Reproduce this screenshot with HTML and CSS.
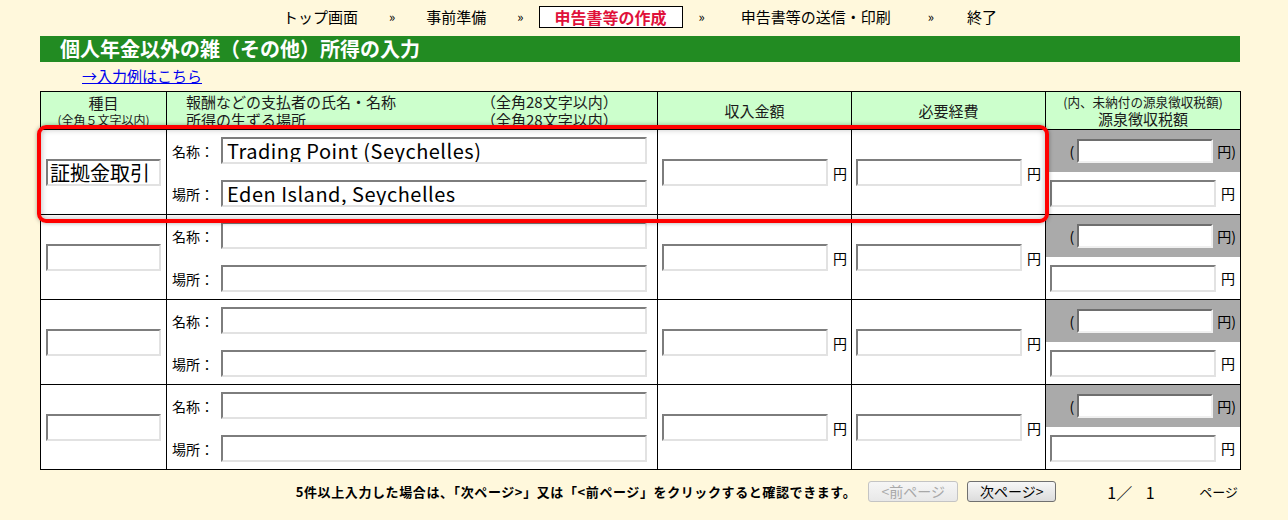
FILE: index.html
```html
<!DOCTYPE html>
<html lang="ja">
<head>
<meta charset="utf-8">
<title>個人年金以外の雑（その他）所得の入力</title>
<link rel="stylesheet" href="styles.css">
</head>
<body>
<div class="page">
  <nav class="steps">
    <span class="step">トップ画面</span>
    <span class="sep">»</span>
    <span class="step">事前準備</span>
    <span class="sep sep-pre">»</span>
    <span class="step current">申告書等の作成</span>
    <span class="sep sep-post">»</span>
    <span class="step">申告書等の送信・印刷</span>
    <span class="sep sep-wide">»</span>
    <span class="step">終了</span>
  </nav>

  <h1 class="title">個人年金以外の雑（その他）所得の入力</h1>
  <div class="example"><a href="#">→入力例はこちら</a></div>

  <div class="table-wrap">
    <table class="grid">
      <colgroup>
        <col class="c1"><col class="c2"><col class="c3"><col class="c4"><col class="c5">
      </colgroup>
      <thead>
        <tr>
          <th class="h-kind"><div class="h-main">種目</div><div class="h-sub">(全角５文字以内)</div></th>
          <th class="h-payer">
            <div class="h-line"><span class="h-left">報酬などの支払者の氏名・名称</span><span>（全角28文字以内）</span></div>
            <div class="h-line"><span class="h-left">所得の生ずる場所</span><span>（全角28文字以内）</span></div>
          </th>
          <th>収入金額</th>
          <th>必要経費</th>
          <th class="h-tax"><div class="h-sub2">(内、未納付の源泉徴収税額)</div><div class="h-main">源泉徴収税額</div></th>
        </tr>
      </thead>
      <tbody>
        <tr>
          <td class="kind"><input class="in-kind" type="text" value="証拠金取引"></td>
          <td class="payer">
            <div class="pline"><span class="plabel">名称：</span><input class="in-payer" type="text" value="Trading Point (Seychelles)"></div>
            <div class="pline"><span class="plabel">場所：</span><input class="in-payer" type="text" value="Eden Island, Seychelles"></div>
          </td>
          <td class="money"><input class="in-money" type="text"><span class="yen">円</span></td>
          <td class="money"><input class="in-money" type="text"><span class="yen">円</span></td>
          <td class="tax">
            <div class="tax-top"><span class="paren">(</span><input class="in-tax" type="text"><span class="yen">円)</span></div>
            <div class="tax-bottom"><input class="in-money" type="text"><span class="yen">円</span></div>
          </td>
        </tr>
        <tr>
          <td class="kind"><input class="in-kind" type="text"></td>
          <td class="payer">
            <div class="pline"><span class="plabel">名称：</span><input class="in-payer" type="text"></div>
            <div class="pline"><span class="plabel">場所：</span><input class="in-payer" type="text"></div>
          </td>
          <td class="money"><input class="in-money" type="text"><span class="yen">円</span></td>
          <td class="money"><input class="in-money" type="text"><span class="yen">円</span></td>
          <td class="tax">
            <div class="tax-top"><span class="paren">(</span><input class="in-tax" type="text"><span class="yen">円)</span></div>
            <div class="tax-bottom"><input class="in-money" type="text"><span class="yen">円</span></div>
          </td>
        </tr>
        <tr>
          <td class="kind"><input class="in-kind" type="text"></td>
          <td class="payer">
            <div class="pline"><span class="plabel">名称：</span><input class="in-payer" type="text"></div>
            <div class="pline"><span class="plabel">場所：</span><input class="in-payer" type="text"></div>
          </td>
          <td class="money"><input class="in-money" type="text"><span class="yen">円</span></td>
          <td class="money"><input class="in-money" type="text"><span class="yen">円</span></td>
          <td class="tax">
            <div class="tax-top"><span class="paren">(</span><input class="in-tax" type="text"><span class="yen">円)</span></div>
            <div class="tax-bottom"><input class="in-money" type="text"><span class="yen">円</span></div>
          </td>
        </tr>
        <tr>
          <td class="kind"><input class="in-kind" type="text"></td>
          <td class="payer">
            <div class="pline"><span class="plabel">名称：</span><input class="in-payer" type="text"></div>
            <div class="pline"><span class="plabel">場所：</span><input class="in-payer" type="text"></div>
          </td>
          <td class="money"><input class="in-money" type="text"><span class="yen">円</span></td>
          <td class="money"><input class="in-money" type="text"><span class="yen">円</span></td>
          <td class="tax">
            <div class="tax-top"><span class="paren">(</span><input class="in-tax" type="text"><span class="yen">円)</span></div>
            <div class="tax-bottom"><input class="in-money" type="text"><span class="yen">円</span></div>
          </td>
        </tr>
      </tbody>
    </table>
    <div class="highlight"></div>
  </div>

  <div class="footer">
    <span class="note">5件以上入力した場合は、「次ページ>」又は「<前ページ」をクリックすると確認できます。</span>
    <button class="btn btn-prev" type="button" disabled>&lt;前ページ</button>
    <button class="btn btn-next" type="button">次ページ&gt;</button>
    <span class="pageno">1／ 1</span>
    <span class="pagelabel">ページ</span>
  </div>
</div>
</body>
</html>
```

FILE: styles.css
```css
* { box-sizing: border-box; }

body {
  margin: 0;
  background: #fff8dc;
  font-family: "Noto Sans CJK JP", "Noto Sans", sans-serif;
  color: #000;
}

.page {
  width: 1288px;
  padding: 0 48px 0 40px;
}

/* step navigation */
.steps {
  display: flex;
  align-items: center;
  height: 22px;
  margin-top: 6px;
  padding-left: 243px;
}
.step {
  font-size: 15px;
  line-height: 22px;
  white-space: nowrap;
}
.step.current {
  border: 1px solid #000;
  background: #fff;
  color: #e0103a;
  font-size: 16px;
  font-weight: bold;
  height: 22px;
  line-height: 20px;
  padding: 0 15px;
}
.sep {
  font-size: 13px;
  line-height: 22px;
  margin: 0 31px;
}
.sep-pre { margin-right: 15px; }
.sep-post { margin-left: 16px; margin-right: 36px; }
.sep-wide { margin-left: 37px; margin-right: 33px; }

/* title */
.title {
  margin: 8px 0 0;
  height: 26px;
  background: #228b22;
  color: #fff;
  font-size: 20px;
  font-weight: bold;
  line-height: 26px;
  padding-left: 20px;
  white-space: nowrap;
}

.example {
  margin: 4px 0 5px;
  padding-left: 42px;
  font-size: 15px;
  line-height: 20px;
}
.example a { color: #0000ee; }

/* table */
.table-wrap {
  position: relative;
  width: 1200px;
}
.grid {
  border-collapse: collapse;
  table-layout: fixed;
  width: 1200px;
}
.c1 { width: 126px; }
.c2 { width: 491px; }
.c3 { width: 194px; }
.c4 { width: 194px; }
.c5 { width: 195px; }

.grid th,
.grid td {
  border: 1px solid #000;
  padding: 0;
}
.grid th {
  background: #ccffcc;
  font-weight: normal;
  font-size: 15px;
  line-height: 18px;
  height: 38px;
  color: #1a1a1a;
  text-align: center;
  vertical-align: middle;
}
.h-sub {
  font-size: 12px;
  line-height: 16px;
}
.h-sub2 {
  font-size: 12.6px;
  line-height: 16px;
}
.h-payer { text-align: left; }
.h-line {
  display: flex;
  padding-left: 19px;
  white-space: nowrap;
  text-align: left;
}
.h-left { width: 295px; }

.grid td {
  height: 85px;
  background: #fff;
  vertical-align: middle;
}

input {
  display: block;
  border-width: 2px;
  border-style: solid;
  border-color: #7d7d7d #e2e2e2 #e2e2e2 #7d7d7d;
  background: #fff;
  font-family: "Noto Sans CJK JP", "Noto Sans", sans-serif;
  font-size: 20px;
  color: #000;
  padding: 0 4px;
  margin: 0;
  outline: none;
}

.kind { padding-left: 5px !important; }
.in-kind {
  width: 115px;
  height: 27px;
  padding: 0 2px;
}

.payer { padding: 0 0 0 5px !important; }
.pline {
  display: flex;
  align-items: center;
}
.pline + .pline { margin-top: 16px; }
.plabel {
  font-size: 14px;
  width: 49px;
  line-height: 26px;
}
.in-payer {
  width: 426px;
  height: 27px;
  letter-spacing: 0.5px;
}

.money { padding-left: 4px !important; }
.money,
.tax-bottom {
  white-space: nowrap;
}
.money input,
.tax-bottom input {
  display: inline-block;
  vertical-align: middle;
}
.in-money {
  width: 166px;
  height: 27px;
}
.yen {
  font-size: 14px;
  margin-left: 5px;
  vertical-align: middle;
}

.tax { padding: 0 !important; }
.tax-top {
  background: #aaaaaa;
  height: 42px;
  display: flex;
  align-items: center;
  justify-content: flex-end;
  padding-right: 4px;
}
.paren {
  font-size: 14px;
  margin-right: 3px;
}
.tax-top .yen { margin-left: 4px; }
.in-tax {
  width: 136px;
  height: 24px;
  border-color: #6e6e6e #f0f0f0 #f0f0f0 #6e6e6e;
}
.tax-bottom {
  height: 42px;
  display: flex;
  align-items: center;
  padding-left: 4px;
}

.highlight {
  position: absolute;
  left: -3px;
  top: 34px;
  width: 1012px;
  height: 98px;
  border: 4px solid #ff0000;
  border-radius: 9px;
  box-shadow: 0 0 4px rgba(0, 0, 0, 0.35), inset 0 0 6px rgba(0, 0, 0, 0.3);
  pointer-events: none;
}

/* footer */
.footer {
  display: flex;
  align-items: center;
  justify-content: flex-end;
  height: 21px;
  margin-top: 11px;
  padding-right: 2px;
}
.note {
  font-size: 13px;
  font-weight: bold;
  letter-spacing: 0.6px;
  margin-right: 12px;
  white-space: nowrap;
}
.btn {
  height: 21px;
  font-family: "Noto Sans CJK JP", "Noto Sans", sans-serif;
  font-size: 14px;
  line-height: 17px;
  border: 1px solid #707070;
  border-radius: 3px;
  background: linear-gradient(#f7f7f7, #dcdcdc);
  color: #000;
  padding: 0;
}
.btn-prev {
  width: 90px;
  color: #a8a8a8;
  border-color: #c4c4c4;
  background: linear-gradient(#f6f6f6, #e8e8e8);
}
.btn-next {
  width: 89px;
  margin-left: 9px;
}
.pageno {
  font-size: 16px;
  word-spacing: 10px;
  margin-left: 51px;
  width: 92px;
  white-space: nowrap;
}
.pagelabel {
  font-size: 13px;
}
```
